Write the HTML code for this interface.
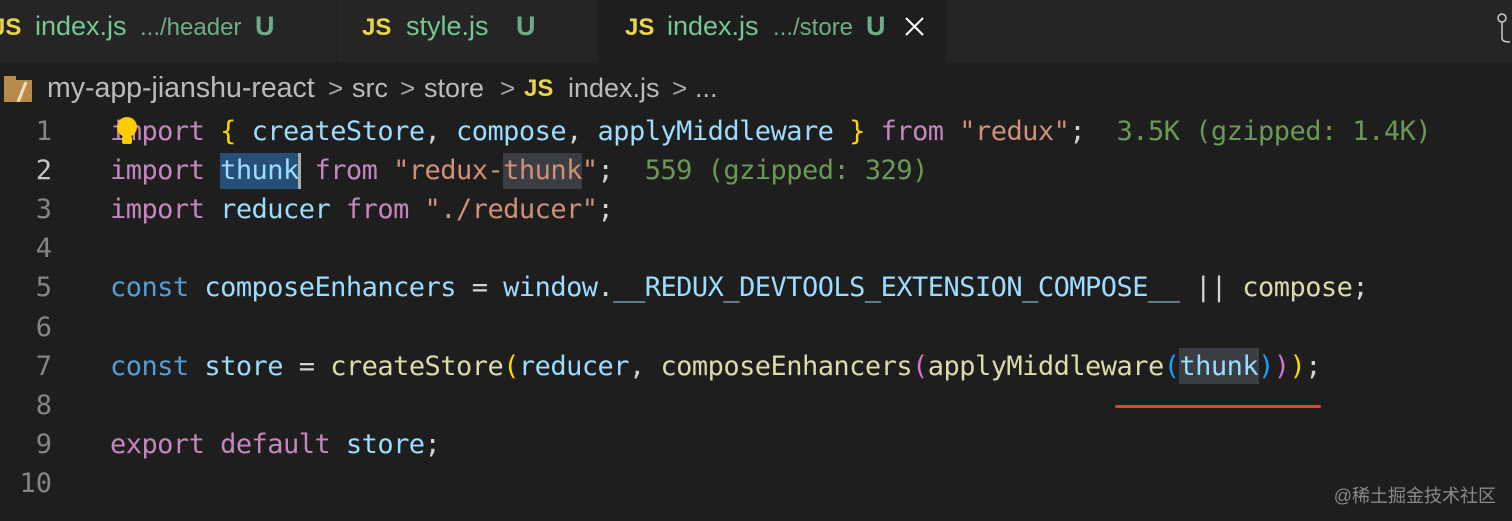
<!DOCTYPE html>
<html><head><meta charset="utf-8"><style>
*{margin:0;padding:0;box-sizing:border-box}
body{width:1512px;height:521px;background:#1e1e1e;overflow:hidden;position:relative;font-family:"Liberation Sans",sans-serif}
.tabs{position:absolute;left:0;top:0;width:1512px;height:63px;background:#252526}
.t{position:absolute;top:8px;font-size:27px;color:#73c991;line-height:36px;white-space:nowrap}
.js{color:#e8d44d;font-weight:bold;font-size:24px}
.dim{font-size:24px;color:#6fae85}
.u{color:#6fae85;font-weight:bold}
.b1{position:absolute;top:68px;font-size:27px;color:#bbbbbb;line-height:40px;white-space:nowrap}
.ch{color:#aaa;font-size:26px}
.code{position:absolute;left:0;top:112px;font-family:"DejaVu Sans Mono","Liberation Mono",monospace;font-size:27px;letter-spacing:-0.53px}
.ln{position:absolute;left:0;width:52px;text-align:right;color:#858585;height:39.1px;line-height:39.1px;letter-spacing:0}
.l{position:absolute;left:110px;height:39.1px;line-height:39.1px;white-space:pre;color:#d4d4d4}
.k{color:#c586c0}.c{color:#569cd6}.v{color:#9cdcfe}.f{color:#dcdcaa}.s{color:#ce9178}.g{color:#6a9955}.y{color:#ffd700}.p{color:#da70d6}.b{color:#179fff}.w{color:#d4d4d4}
</style></head><body>
<div class="tabs">
 <div style="position:absolute;left:336px;top:0;width:1px;height:63px;background:#1e1e1e"></div>
 <div style="position:absolute;left:598px;top:0;width:348px;height:63px;background:#1e1e1e"></div>
 <span class="t js" style="left:-8px;top:10px">JS</span><span class="t" style="left:35px">index.js</span><span class="t dim" style="left:140px;top:10px">.../header</span><span class="t u" style="left:255px">U</span>
 <span class="t js" style="left:362px;top:10px">JS</span><span class="t" style="left:406px">style.js</span><span class="t u" style="left:516px">U</span>
 <span class="t js" style="left:625px;top:10px">JS</span><span class="t" style="left:667px">index.js</span><span class="t dim" style="left:773px;top:10px">.../store</span><span class="t u" style="left:866px">U</span>
 <svg style="position:absolute;left:905px;top:17px" width="19" height="19"><path d="M1 1L18 18M18 1L1 18" stroke="#fff" stroke-width="2"/></svg>
 <svg style="position:absolute;left:1496px;top:12px" width="16" height="34" viewBox="0 0 16 34"><circle cx="6" cy="6" r="4" fill="none" stroke="#ccc" stroke-width="1.5"/><path d="M6 10v16c0 3 3 4 8 4" fill="none" stroke="#ccc" stroke-width="1.5"/></svg>
</div>
<svg style="position:absolute;left:4px;top:76px" width="32" height="26"><rect x="0" y="4" width="28" height="22" fill="#b88a4c"/><rect x="0" y="0" width="12" height="6" fill="#b88a4c"/><path d="M22 6 L14 26" stroke="#f0e0c0" stroke-width="3"/></svg>
<span class="b1" style="left:47px;font-size:28.5px">my-app-jianshu-react</span>
<span class="b1 ch" style="left:328px">&gt;</span>
<span class="b1" style="left:352px">src</span>
<span class="b1 ch" style="left:400px">&gt;</span>
<span class="b1" style="left:424px">store</span>
<span class="b1 ch" style="left:500px">&gt;</span>
<span class="b1" style="left:524px;top:69px;color:#e8d44d;font-weight:bold;font-size:24px">JS</span>
<span class="b1" style="left:568px">index.js</span>
<span class="b1 ch" style="left:672px">&gt;</span>
<span class="b1" style="left:695px">...</span>
<div class="code">
 <div class="ln" style="top:0">1</div><div class="ln" style="top:39.1px;color:#c6c6c6">2</div><div class="ln" style="top:78.2px">3</div><div class="ln" style="top:117.3px">4</div><div class="ln" style="top:156.4px">5</div><div class="ln" style="top:195.5px">6</div><div class="ln" style="top:234.6px">7</div><div class="ln" style="top:273.7px">8</div><div class="ln" style="top:312.8px">9</div><div class="ln" style="top:351.9px">10</div>
 <div class="l" style="top:0"><span class="k">import</span> <span class="y">{</span> <span class="v">createStore</span>, <span class="v">compose</span>, <span class="v">applyMiddleware</span> <span class="y">}</span> <span class="k">from</span> <span class="s">"redux"</span>;  <span class="g">3.5K (gzipped: 1.4K)</span></div>
 <svg style="position:absolute;left:114px;top:3px" width="26" height="34"><circle cx="13" cy="12" r="10" fill="#ffcc00"/><rect x="8" y="21" width="10" height="8" rx="2" fill="#ffcc00"/></svg>
 <div style="position:absolute;left:220px;top:41px;width:79px;height:36px;background:#264f78"></div>
 <div style="position:absolute;left:298px;top:41px;width:3px;height:36px;background:#aeafad"></div>
 <div style="position:absolute;left:503px;top:41px;width:79px;height:36px;background:#3a3d41"></div>
 <div class="l" style="top:39.1px"><span class="k">import</span> <span class="v">thunk</span> <span class="k">from</span> <span class="s">"redux-thunk"</span>;  <span class="g">559 (gzipped: 329)</span></div>
 <div class="l" style="top:78.2px"><span class="k">import</span> <span class="v">reducer</span> <span class="k">from</span> <span class="s">"./reducer"</span>;</div>
 <div class="l" style="top:156.4px"><span class="c">const</span> <span class="v">composeEnhancers</span> = <span class="v">window</span>.<span class="v">__REDUX_DEVTOOLS_EXTENSION_COMPOSE__</span> || <span class="f">compose</span>;</div>
 <div style="position:absolute;left:1179px;top:236px;width:80px;height:36px;background:#3a3d41"></div>
 <div class="l" style="top:234.6px"><span class="c">const</span> <span class="v">store</span> = <span class="f">createStore</span><span class="y">(</span><span class="v">reducer</span>, <span class="f">composeEnhancers</span><span class="p">(</span><span class="f">applyMiddleware</span><span class="b">(</span><span class="v">thunk</span><span class="b">)</span><span class="p">)</span><span class="y">)</span>;</div>
 <div style="position:absolute;left:1115px;top:293px;width:206px;height:3px;background:#e0442f;border-radius:2px"></div>
 <div class="l" style="top:312.8px"><span class="k">export</span> <span class="k">default</span> <span class="v">store</span>;</div>
</div>
<div style="position:absolute;right:16px;top:482px;font-size:18px;color:#8a8a8a;font-family:'Liberation Sans','Noto Sans CJK SC',sans-serif">@稀土掘金技术社区</div>
</body></html>
